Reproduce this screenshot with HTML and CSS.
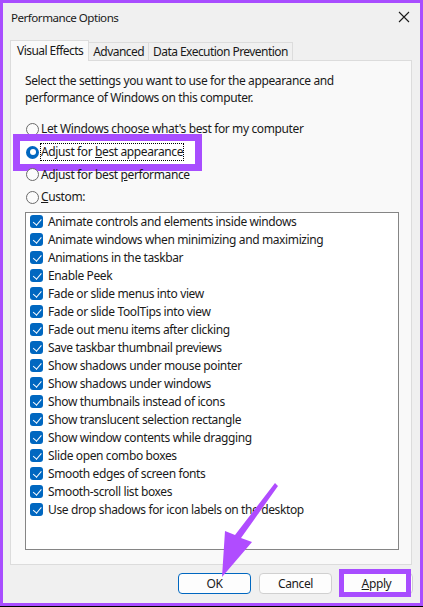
FILE: index.html
```html
<!DOCTYPE html>
<html>
<head>
<meta charset="utf-8">
<link rel="stylesheet" href="styles.css">
</head>
<body>
<div class="window">
  <div class="titlebar">
    <span class="title">Performance Options</span>
    <svg class="close" width="12" height="12" viewBox="0 0 12 12"><path d="M1 1L11 11M11 1L1 11" stroke="#1a1a1a" stroke-width="1.1" fill="none"/></svg>
  </div>
  <div class="tabstrip">
    <div class="tab active">Visual Effects</div>
    <div class="tab">Advanced</div>
    <div class="tab">Data Execution Prevention</div>
  </div>
  <div class="panel">
    <p class="intro">Select the settings you want to use for the appearance and<br>performance of Windows on this computer.</p>
    <div class="radios">
      <label class="radio"><span class="circle"></span><span class="rtext">Let Windows choose what's best for my computer</span></label>
      <label class="radio highlighted"><span class="circle on"></span><span class="rtext focus">Adjust for <u>b</u>est appearance</span></label>
      <label class="radio"><span class="circle"></span><span class="rtext">Adjust for best <u>p</u>erformance</span></label>
      <label class="radio"><span class="circle"></span><span class="rtext"><u>C</u>ustom:</span></label>
    </div>
    <div class="listbox">
      <div class="item"><span class="check"></span>Animate controls and elements inside windows</div>
      <div class="item"><span class="check"></span>Animate windows when minimizing and maximizing</div>
      <div class="item"><span class="check"></span>Animations in the taskbar</div>
      <div class="item"><span class="check"></span>Enable Peek</div>
      <div class="item"><span class="check"></span>Fade or slide menus into view</div>
      <div class="item"><span class="check"></span>Fade or slide ToolTips into view</div>
      <div class="item"><span class="check"></span>Fade out menu items after clicking</div>
      <div class="item"><span class="check"></span>Save taskbar thumbnail previews</div>
      <div class="item"><span class="check"></span>Show shadows under mouse pointer</div>
      <div class="item"><span class="check"></span>Show shadows under windows</div>
      <div class="item"><span class="check"></span>Show thumbnails instead of icons</div>
      <div class="item"><span class="check"></span>Show translucent selection rectangle</div>
      <div class="item"><span class="check"></span>Show window contents while dragging</div>
      <div class="item"><span class="check"></span>Slide open combo boxes</div>
      <div class="item"><span class="check"></span>Smooth edges of screen fonts</div>
      <div class="item"><span class="check"></span>Smooth-scroll list boxes</div>
      <div class="item"><span class="check"></span>Use drop shadows for icon labels on the desktop</div>
    </div>
  </div>
  <div class="buttons">
    <button class="btn default">OK</button>
    <button class="btn">Cancel</button>
    <button class="btn"><u>A</u>pply</button>
  </div>
  <div class="apply-mark"></div>
  <svg class="arrow" width="423" height="607" viewBox="0 0 423 607">
    <polygon points="222,577 225,531 235,535 275,483 278,486 241,538 252,542" fill="#b04cff"/>
  </svg>
</div>
</body>
</html>
```
FILE: styles.css
```css
*, *::before, *::after { box-sizing: border-box; }
html, body { margin: 0; padding: 0; }
body {
  background: #000;
  width: 423px;
  height: 607px;
  font-family: "Noto Sans", "Segoe UI", sans-serif;
  font-size: 12px;
  letter-spacing: -0.38px;
  color: #1a1a1a;
}
.window {
  position: relative;
  width: 423px;
  height: 606px;
  border: 3px solid #a84dff;
  background: #f0f0f0;
  display: flex;
  flex-direction: column;
}
.titlebar {
  height: 28px;
  display: flex;
  align-items: center;
  justify-content: space-between;
  padding: 0 10px 0 8px;
}
.title { font-size: 11.6px; letter-spacing: -0.5px; }
.close { display: block; }
.tabstrip {
  margin-top: 9px;
  padding-left: 7px;
  display: flex;
  align-items: flex-end;
  position: relative;
  z-index: 1;
}
.tab {
  height: 18px;
  padding: 0 4px;
  border: 1px solid #dcdcdc;
  border-bottom: none;
  border-left: none;
  background: #f0f0f0;
  line-height: 17px;
  white-space: nowrap;
  letter-spacing: -0.55px;
}
.tab.active {
  height: 21px;
  border-left: 1px solid #dcdcdc;
  background: #f9f9f9;
  padding: 0 5px 0 6px;
  line-height: 19px;
  margin-bottom: -1px;
}
.panel {
  margin: 0 8px 0 7px;
  height: 505px;
  background: #f9f9f9;
  border: 1px solid #dcdcdc;
  padding: 11px 0 0 14px;
}
.intro {
  margin: 0;
  line-height: 17px;
}
.radios {
  margin-top: 12px;
  display: flex;
  flex-direction: column;
}
.radio {
  height: 22.7px;
  display: flex;
  align-items: center;
  position: relative;
}
.radio.highlighted::before {
  content: "";
  position: absolute;
  left: -12px;
  top: -7px;
  width: 189px;
  height: 37px;
  border: 7px solid #a84dff;
  background: #fff;
}
.circle {
  position: relative;
  width: 13px;
  height: 13px;
  border-radius: 50%;
  border: 1px solid #6a6a6a;
  background: #fbfbfb;
  margin-left: 1px;
  margin-right: 2px;
  flex: none;
}
.circle.on {
  border: none;
  background: #0067c0;
}
.circle.on::after {
  content: "";
  position: absolute;
  left: 3.5px;
  top: 3.5px;
  width: 6px;
  height: 6px;
  border-radius: 50%;
  background: #fff;
}
.rtext { position: relative; white-space: nowrap; line-height: 16px; }
.rtext.focus { outline: 1px dotted #000; outline-offset: 0; }
.listbox {
  margin-top: 3px;
  width: 374px;
  height: 338px;
  border: 1px solid #858585;
  background: #fff;
  padding: 0 0 0 4px;
}
.item {
  height: 18px;
  display: flex;
  align-items: center;
  white-space: nowrap;
}
.check {
  width: 13px;
  height: 13px;
  border-radius: 3px;
  background: #0067c0;
  margin-right: 5px;
  flex: none;
  position: relative;
}
.check::after {
  content: "";
  position: absolute;
  left: 4.5px;
  top: 2px;
  width: 4.5px;
  height: 7.5px;
  border: solid #fff;
  border-width: 0 1.2px 1.2px 0;
  transform: rotate(40deg);
}
.buttons {
  margin-top: 8px;
  display: flex;
  justify-content: flex-end;
  gap: 8px;
  padding-right: 7px;
}
.btn {
  width: 73px;
  height: 21px;
  border: 1px solid #d0d0d0;
  border-radius: 4px;
  background: #fdfdfd;
  font-family: inherit;
  font-size: 12px;
  letter-spacing: -0.38px;
  color: #1a1a1a;
  padding: 0;
}
.btn.default { border-color: #0067c0; }
.apply-mark {
  position: absolute;
  left: 336px;
  top: 566px;
  width: 72px;
  height: 28px;
  border: 5px solid #a84dff;
  pointer-events: none;
}
.arrow {
  position: absolute;
  left: -3px;
  top: -3px;
  pointer-events: none;
}
```
